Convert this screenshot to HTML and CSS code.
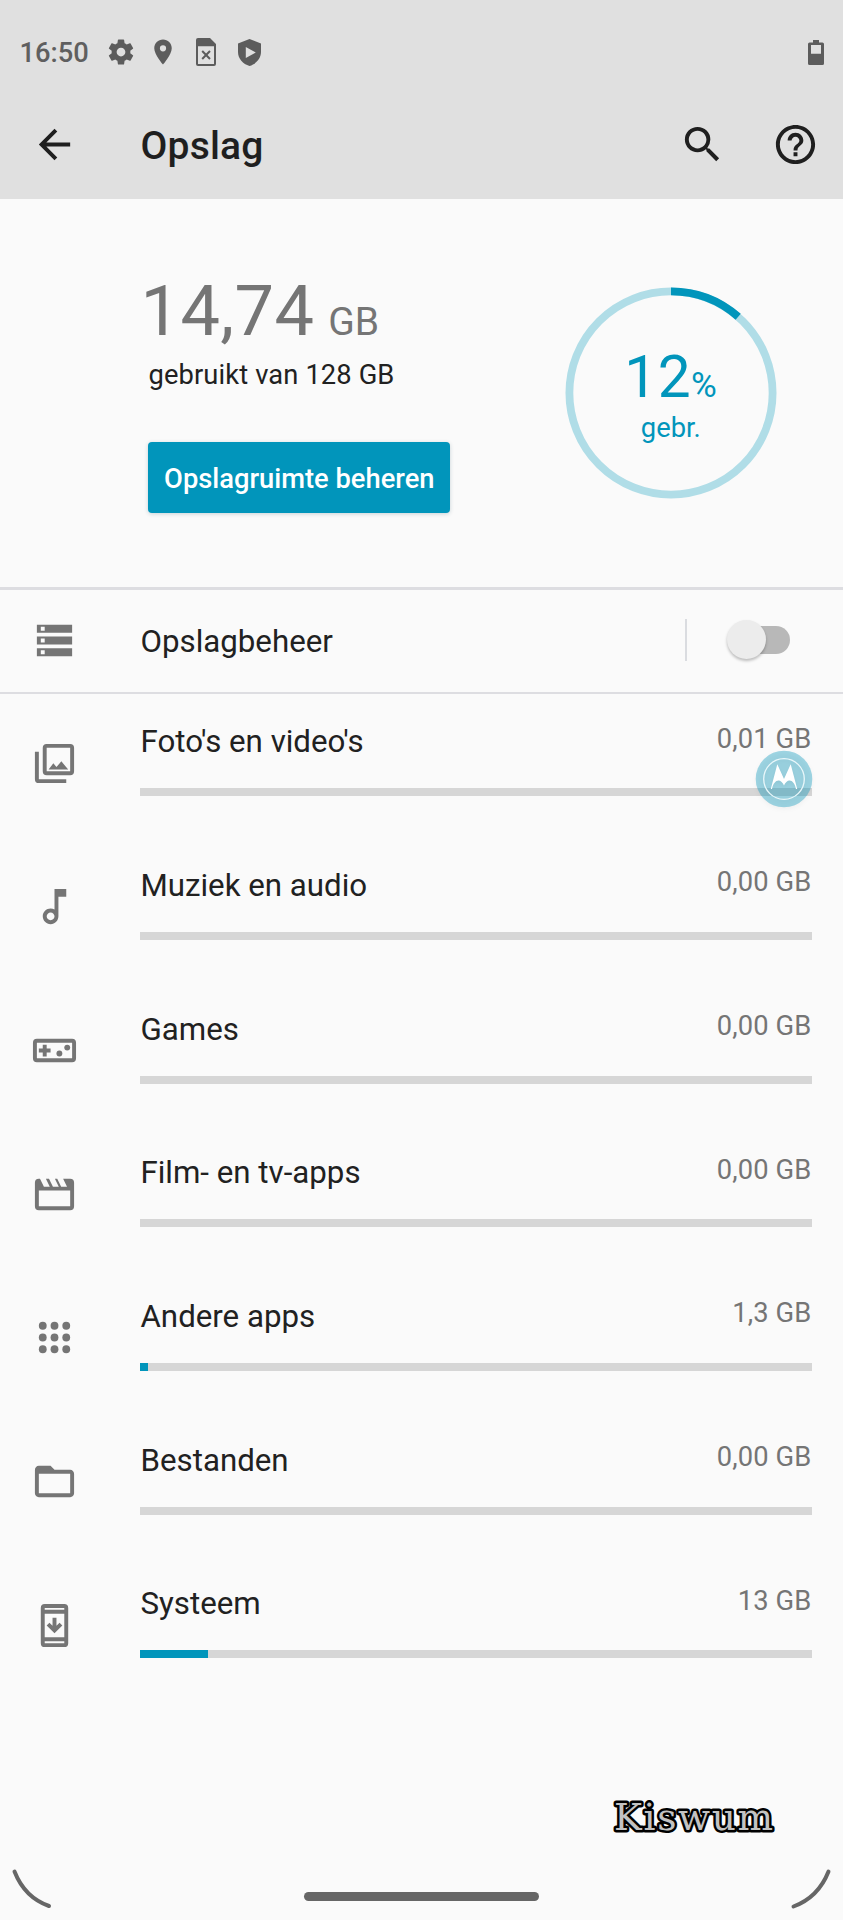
FILE: index.html
```html
<!DOCTYPE html>
<html lang="nl">
<head>
<meta charset="utf-8">
<title>Opslag</title>
<link rel="stylesheet" href="styles.css">
</head>
<body>
<div class="screen">
  <header class="header">
    <div class="status">
      <span class="clock">16:50</span>
      <svg class="st-gear" viewBox="0 0 24 24"><path d="M19.43 12.98c.04-.32.07-.64.07-.98s-.03-.66-.07-.98l2.11-1.65c.19-.15.24-.42.12-.64l-2-3.46c-.12-.22-.39-.3-.61-.22l-2.49 1c-.52-.4-1.08-.73-1.69-.98l-.38-2.65C14.46 2.18 14.25 2 14 2h-4c-.25 0-.46.18-.49.42l-.38 2.65c-.61.25-1.17.59-1.69.98l-2.49-1c-.23-.09-.49 0-.61.22l-2 3.46c-.13.22-.07.49.12.64l2.11 1.65c-.04.32-.07.65-.07.98s.03.66.07.98l-2.11 1.65c-.19.15-.24.42-.12.64l2 3.46c.12.22.39.3.61.22l2.49-1c.52.4 1.08.73 1.69.98l.38 2.65c.03.24.24.42.49.42h4c.25 0 .46-.18.49-.42l.38-2.65c.61-.25 1.17-.59 1.69-.98l2.49 1c.23.09.49 0 .61-.22l2-3.46c.12-.22.07-.49-.12-.64l-2.11-1.65zM12 15.5c-1.93 0-3.5-1.57-3.5-3.5s1.57-3.5 3.5-3.5 3.5 1.57 3.5 3.5-1.57 3.5-3.5 3.5z"/></svg>
      <svg class="st-pin" viewBox="0 0 24 24"><path d="M12 2C8.13 2 5 5.13 5 9c0 5.25 7 13 7 13s7-7.75 7-13c0-3.87-3.13-7-7-7zm0 9.5a2.5 2.5 0 0 1 0-5 2.5 2.5 0 0 1 0 5z"/></svg>
      <svg class="st-sim" viewBox="0 0 20 28"><path fill-rule="evenodd" d="M2 0H14L20 6V26Q20 28 18 28H2Q0 28 0 26V2Q0 0 2 0ZM2 8.2V26H18V8.2Z"/><path class="sim-x" d="M6.2 13L14 21M14 13L6.2 21"/></svg>
      <svg class="st-shield" viewBox="0 0 23 27"><path fill-rule="evenodd" d="M11.5 0L23 4.5V13C23 19.5 18 25 11.5 27C5 25 0 19.5 0 13V4.5ZM7.8 8V19L17.8 13.5Z"/></svg>
      <svg class="st-battery" viewBox="0 0 16 25"><path fill-rule="evenodd" d="M5 0H11V2.5H14.4Q16 2.5 16 4V23.4Q16 25 14.4 25H1.6Q0 25 0 23.4V4Q0 2.5 1.6 2.5H5ZM3 5V13.7H13V5Z"/></svg>
    </div>
    <div class="toolbar">
      <svg class="icon back" viewBox="0 0 24 24"><path d="M20 11H7.83l5.59-5.59L12 4l-8 8 8 8 1.41-1.41L7.83 13H20v-2z"/></svg>
      <h1 class="title">Opslag</h1>
      <svg class="icon search" viewBox="0 0 24 24"><path d="M15.5 14h-.79l-.28-.27A6.471 6.471 0 0 0 16 9.5 6.5 6.5 0 1 0 9.5 16c1.61 0 3.09-.59 4.23-1.57l.27.28v.79l5 4.99L20.49 19l-4.99-5zm-6 0C7.01 14 5 11.99 5 9.5S7.01 5 9.5 5 14 7.01 14 9.5 11.99 14 9.5 14z"/></svg>
      <svg class="icon help" viewBox="0 0 24 24"><path d="M11 18h2v-2h-2v2zm1-16C6.48 2 2 6.48 2 12s4.48 10 10 10 10-4.48 10-10S17.52 2 12 2zm0 18c-4.41 0-8-3.59-8-8s3.59-8 8-8 8 3.59 8 8-3.59 8-8 8zm0-14c-2.21 0-4 1.79-4 4h2c0-1.1.9-2 2-2s2 .9 2 2c0 2-3 1.75-3 5h2c0-2.25 3-2.5 3-5 0-2.21-1.79-4-4-4z"/></svg>
    </div>
  </header>

  <section class="summary">
    <div class="usage">
      <div class="amount">14,74 <span class="unit">GB</span></div>
      <div class="total">gebruikt van 128 GB</div>
      <button class="manage">Opslagruimte beheren</button>
    </div>
    <div class="donut">
      <svg class="ring" viewBox="0 0 212 212">
        <circle class="ring-track" cx="106" cy="106" r="101.6"/>
        <circle class="ring-value" cx="106" cy="106" r="101.6" pathLength="100" stroke-dasharray="11.5 88.5" transform="rotate(-90 106 106)"/>
      </svg>
      <div class="donut-label">
        <div class="percent">12<span class="sign">%</span></div>
        <div class="used">gebr.</div>
      </div>
    </div>
  </section>

  <section class="manager">
    <svg class="icon" viewBox="0 0 24 24"><path fill-rule="evenodd" d="M3 4h18v4H3zM5 5v2h2V5zM3 10h18v4H3zM5 11v2h2v-2zM3 16h18v4H3zM5 17v2h2v-2z"/></svg>
    <span class="name">Opslagbeheer</span>
    <span class="divider"></span>
    <span class="toggle"><span class="thumb"></span></span>
  </section>

  <main class="list">
    <div class="row">
      <svg class="icon" viewBox="0 0 24 24"><path fill-rule="evenodd" d="M8 2h12q2 0 2 2v12q0 2-2 2H8q-2 0-2-2V4q0-2 2-2zM8 4v12h12V4zM2 6h2v14h14v2H4q-2 0-2-2zM9 15l2.4-3.1L13 13.8l2.5-2.9L19 15z"/></svg>
      <div class="body"><div class="line"><span class="name">Foto's en video's</span><span class="value">0,01 GB</span></div><div class="bar"></div></div>
      <svg class="moto" viewBox="0 0 58 58"><circle class="moto-disc" cx="29" cy="29" r="28.3"/><circle class="moto-ring" cx="29" cy="29" r="20.3"/><path class="moto-m" d="M15.8 39L22.3 14.3L29 29L35.7 14.3L42.2 39L41 39C39.8 33.5 37.3 30.6 34.6 30.6C32.3 30.6 30.2 32.6 29 35.6C27.8 32.6 25.7 30.6 23.4 30.6C20.7 30.6 18.2 33.5 17 39Z"/></svg>
    </div>
    <div class="row">
      <svg class="icon" viewBox="0 0 24 24"><path d="M12 3l.01 10.55c-.59-.34-1.27-.55-2-.55C7.79 13 6 14.79 6 17s1.79 4 4.01 4S14 19.21 14 17V7h4V3h-6zm-1.99 16c-1.1 0-2-.9-2-2s.9-2 2-2 2 .9 2 2-.9 2-2 2z"/></svg>
      <div class="body"><div class="line"><span class="name">Muziek en audio</span><span class="value">0,00 GB</span></div><div class="bar"></div></div>
    </div>
    <div class="row">
      <svg class="icon" viewBox="0 0 24 24"><path fill-rule="evenodd" d="M3 6h18q2 0 2 2v8q0 2-2 2H3q-2 0-2-2V8q0-2 2-2zM3 8v8h18V8z"/><path d="M6 9h2v2h2v2H8v2H6v-2H4v-2h2z"/><circle cx="14.5" cy="13.5" r="1.5"/><circle cx="18.5" cy="10.5" r="1.5"/></svg>
      <div class="body"><div class="line"><span class="name">Games</span><span class="value">0,00 GB</span></div><div class="bar"></div></div>
    </div>
    <div class="row">
      <svg class="icon" viewBox="0 0 24 24"><path fill-rule="evenodd" d="M4 4h.6l2 4h3l-2-4h1.6l2 4h3l-2-4h1.2l2 4h3l-2-4H20q2 0 2 2v12q0 2-2 2H4q-2 0-2-2V6q0-2 2-2zM4 10v8h16v-8z"/></svg>
      <div class="body"><div class="line"><span class="name">Film- en tv-apps</span><span class="value">0,00 GB</span></div><div class="bar"></div></div>
    </div>
    <div class="row">
      <svg class="icon" viewBox="0 0 24 24"><circle cx="6" cy="6" r="2"/><circle cx="12" cy="6" r="2"/><circle cx="18" cy="6" r="2"/><circle cx="6" cy="12" r="2"/><circle cx="12" cy="12" r="2"/><circle cx="18" cy="12" r="2"/><circle cx="6" cy="18" r="2"/><circle cx="12" cy="18" r="2"/><circle cx="18" cy="18" r="2"/></svg>
      <div class="body"><div class="line"><span class="name">Andere apps</span><span class="value">1,3 GB</span></div><div class="bar"><div class="fill" style="width:1.1%"></div></div></div>
    </div>
    <div class="row">
      <svg class="icon" viewBox="0 0 24 24"><path d="M20 6h-8l-2-2H4c-1.1 0-1.99.9-1.99 2L2 18c0 1.1.9 2 2 2h16c1.1 0 2-.9 2-2V8c0-1.1-.9-2-2-2zm0 12H4V8h16v10z"/></svg>
      <div class="body"><div class="line"><span class="name">Bestanden</span><span class="value">0,00 GB</span></div><div class="bar"></div></div>
    </div>
    <div class="row">
      <svg class="icon" viewBox="0 0 24 24"><path fill-rule="evenodd" d="M7 1h10q2 0 2 2v18q0 2-2 2H7q-2 0-2-2V3q0-2 2-2zM7 3v1h10V3zM7 6v12h10V6zM7 20v1h10v-1z"/><path d="M16 12l-4 4-4-4 1.41-1.41L11 12.17V8h2v4.17l1.59-1.58z"/></svg>
      <div class="body"><div class="line"><span class="name">Systeem</span><span class="value">13 GB</span></div><div class="bar"><div class="fill" style="width:10%"></div></div></div>
    </div>
  </main>

  <footer class="footer">
    <svg class="signature" viewBox="0 0 170 48"><text x="4" y="36.5" textLength="159">Kiswum</text></svg>
    <div class="nav">
      <svg class="corner" viewBox="0 0 42 42"><path d="M3.5 3.5C10 20 21 32 38 38"/></svg>
      <span class="pill"></span>
      <svg class="corner" viewBox="0 0 42 42"><path d="M38.5 3.5C32 20 21 32 3.5 38.5"/></svg>
    </div>
  </footer>
</div>
</body>
</html>
```
FILE: styles.css
```css
* { box-sizing: border-box; }

body {
  margin: 0;
  background: #fafafa;
  color: #212121;
  font-family: Roboto, "Liberation Sans", sans-serif;
}

svg { display: block; flex: none; }

.screen {
  width: 843px;
  height: 1920px;
  overflow: hidden;
  display: flex;
  flex-direction: column;
}

/* Status bar and toolbar */
.header {
  flex: none;
  height: 198.5px;
  background: #e0e0e0;
}

.status {
  height: 90px;
  padding: 14px 19px 0 19.5px;
  display: flex;
  align-items: center;
  fill: #5c5c5c;
}

.clock {
  width: 86px;
  padding-top: 1px;
  font-size: 27.3px;
  font-weight: 500;
  line-height: 40px;
  color: #5f5f5f;
}

.st-gear { width: 30px; height: 30px; }
.st-pin { width: 30px; height: 30px; margin-left: 12.5px; }
.st-sim { width: 20px; height: 28px; margin-left: 18px; }
.sim-x { stroke: #5c5c5c; stroke-width: 2; }
.st-shield { width: 23px; height: 27px; margin-left: 22px; }
.st-battery { width: 16px; height: 25px; margin-left: auto; }

.toolbar {
  height: 108px;
  padding: 0 24px 0 31.2px;
  display: flex;
  align-items: center;
}

.icon {
  width: 47px;
  height: 47px;
  fill: #757575;
}

.toolbar .icon { fill: #1f1f1f; }

.title {
  flex: 1;
  margin: 0;
  padding: 3px 0 0 62.3px;
  font-size: 39px;
  font-weight: 500;
  line-height: 48px;
  letter-spacing: .2px;
  color: #1f1f1f;
}

.help { margin-left: 46.5px; }

/* Usage summary */
.summary {
  flex: none;
  height: 388.5px;
  display: flex;
  justify-content: space-between;
  padding: 72.5px 66.2px 0 140.5px;
}

.amount {
  height: 80px;
  font-size: 70.3px;
  line-height: 80px;
  letter-spacing: .4px;
  color: #757575;
  white-space: nowrap;
}

.unit {
  margin-left: -4px;
  font-size: 39px;
  letter-spacing: 0;
}

.total {
  padding: 4px 0 0 8px;
  font-size: 27.3px;
  line-height: 40px;
  letter-spacing: .12px;
}

.manage {
  display: block;
  width: 302px;
  height: 71px;
  margin: 47px 0 0 7.8px;
  padding: 2px 0 0;
  border: 0;
  border-radius: 4px;
  background: #0195bb;
  color: #fff;
  font: 500 27.3px/40px Roboto, "Liberation Sans", sans-serif;
  white-space: nowrap;
  box-shadow: 0 1px 4px rgba(0, 60, 80, .2);
}

.donut {
  display: grid;
  width: 212px;
  height: 212px;
  margin-top: 15.5px;
}

.ring, .donut-label { grid-area: 1 / 1; }
.ring circle { fill: none; stroke-width: 7.8; }
.ring-track { stroke: #b0dde7; }
.ring-value { stroke: #0195bb; }

.donut-label {
  padding-top: 57px;
  color: #0195bb;
  text-align: center;
}

.percent {
  height: 66px;
  font-size: 58.6px;
  line-height: 66px;
  letter-spacing: .5px;
}

.sign { font-size: 35.2px; }

.used {
  font-size: 27.3px;
  line-height: 36px;
}

/* Storage manager switch */
.manager {
  flex: none;
  height: 107px;
  padding: 0 53px 0 31.2px;
  border-top: 3px solid #dddde1;
  border-bottom: 2.5px solid #dddde1;
  display: flex;
  align-items: center;
}

.manager .icon { margin-top: -2px; }

.name {
  font-size: 31.25px;
  line-height: 40px;
}

.manager .name {
  flex: 1;
  padding: 2px 0 0 62.3px;
}

.divider {
  width: 2.5px;
  height: 42px;
  margin: -2px 47px 0 0;
  background: #dadce0;
}

.toggle {
  width: 56px;
  height: 28px;
  margin-top: -3px;
  border-radius: 14px;
  background: #b8b8b8;
  display: flex;
  align-items: center;
}

.thumb {
  flex: none;
  width: 39.5px;
  height: 39.5px;
  margin-left: -7.5px;
  border-radius: 50%;
  background: #ececec;
  box-shadow: 0 2px 3px rgba(0, 0, 0, .25);
}

/* Categories */
.list { flex: none; }

.row {
  position: relative;
  height: 143.67px;
  padding: 24px 31.5px 0 31.2px;
  display: flex;
}

.row .icon { margin-top: 21.8px; }

.body {
  flex: 1;
  padding-left: 62.3px;
}

.line {
  height: 70.3px;
  display: flex;
  justify-content: space-between;
}

.line .name { padding-top: 4.3px; }

.value {
  padding-top: .7px;
  font-size: 27.3px;
  line-height: 40px;
  letter-spacing: .15px;
  color: #757575;
}

.bar {
  height: 8px;
  background: #d6d6d6;
}

.fill {
  height: 100%;
  background: #0195bb;
}

/* Floating button over the first row */
.moto {
  position: absolute;
  right: 30px;
  top: 56px;
  width: 58px;
  height: 58px;
  overflow: visible;
  filter: drop-shadow(0 2px 2px rgba(0, 0, 0, .1));
}

.moto-disc { fill: #0195bb; fill-opacity: .37; }
.moto-ring { fill: none; stroke: #e9f7fa; stroke-width: 1.3; }
.moto-m { fill: #fff; }

/* Signature and gesture bar */
.footer {
  flex: 1;
  padding-top: 93px;
}

.signature {
  width: 170px;
  height: 48px;
  margin-left: 610px;
}

.signature text {
  font-family: "DejaVu Serif", serif;
  font-size: 37.5px;
  fill: #c2c2c2;
  stroke: #000;
  stroke-width: 5px;
  stroke-linejoin: round;
  paint-order: stroke fill;
}

.nav {
  display: flex;
  justify-content: space-between;
  align-items: flex-start;
  padding: 27px 11px 0 10.8px;
}

.corner { width: 42px; height: 42px; }

.corner path {
  fill: none;
  stroke: #666;
  stroke-width: 4;
  stroke-linecap: round;
}

.pill {
  width: 235px;
  height: 8.5px;
  margin-top: 24.5px;
  border-radius: 5px;
  background: #666;
}
```
